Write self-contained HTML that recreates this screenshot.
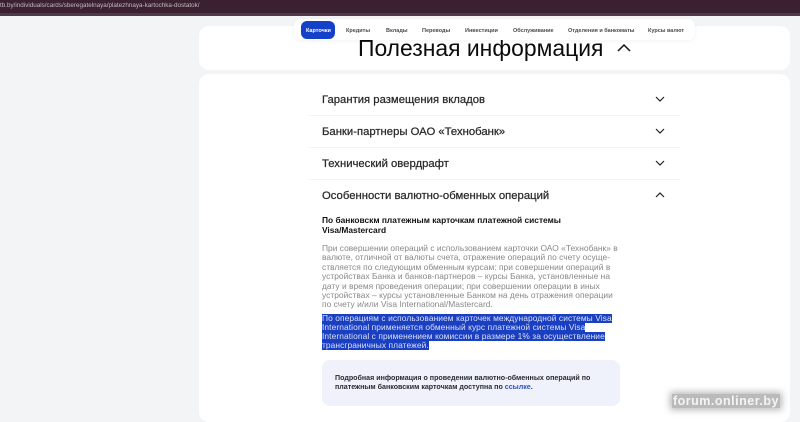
<!DOCTYPE html>
<html lang="ru"><head><meta charset="utf-8"><style>
html,body{margin:0;padding:0;width:800px;height:422px;overflow:hidden;background:#f3f4f6;font-family:"Liberation Sans",sans-serif}
.a{position:absolute;white-space:nowrap}
.bar{left:0;top:0;width:800px;height:13px;background:#3a2030}
.bar2{left:0;top:13px;width:800px;height:3px;background:#4e3a45}
.card{background:#fff;left:199px;width:591px;border-radius:10px}
.nav{left:294px;top:19px;width:401px;height:21px;background:#fff;border-radius:7px;box-shadow:0 1px 4px rgba(0,0,0,.05)}
.btn{left:301px;top:21px;width:34px;height:18px;background:#1441c8;border-radius:6px}
.n{font-size:5.5px;line-height:8px;top:26.6px;color:#222;font-weight:bold;opacity:.82}
.h{font-size:11.3px;line-height:14px;left:322px;color:#2a2a2a;-webkit-text-stroke:.25px #2a2a2a}
.d{left:309px;width:371px;height:1px;background:#f4f4f6}
.b{font-size:8.4px;line-height:11px;left:322px;font-weight:bold;color:#111}
.g{font-size:8.4px;line-height:11px;left:322px;color:#888;letter-spacing:.03px}
.s{font-size:8.4px;line-height:9.2px;height:9.2px;left:322px;color:#d8e0f8;background:#1a3fc0;letter-spacing:.09px}
.i{font-size:7.1px;line-height:10px;left:335px;font-weight:bold;color:#2a2a35}
</style></head><body>
<div class="a bar"></div><div class="a bar2"></div>
<div class="a" style="left:0;top:1.4px;font-size:6.3px;line-height:10px;color:#c4b9bf">tb.by/individuals/cards/sberegatelnaya/platezhnaya-kartochka-dostatok/</div>

<div class="a card" style="top:26px;height:44px"></div>
<div class="a card" style="top:74px;height:348px"></div>

<div class="a" style="left:358px;top:33px;font-size:22.9px;line-height:30px;color:#0b0b0b">Полезная информация</div>
<svg class="a" style="left:616px;top:42px" width="16" height="11" viewBox="0 0 16 11"><path d="M2 9L8 3L14 9" fill="none" stroke="#111" stroke-width="1.5"/></svg>

<div class="a nav"></div><div class="a btn"></div>
<div class="a n" style="left:306px;color:#fff;opacity:1">Карточки</div>
<div class="a n" style="left:346px">Кредиты</div>
<div class="a n" style="left:386px">Вклады</div>
<div class="a n" style="left:422px">Переводы</div>
<div class="a n" style="left:465px">Инвестиции</div>
<div class="a n" style="left:513px">Обслуживание</div>
<div class="a n" style="left:568px">Отделения и банкоматы</div>
<div class="a n" style="left:648px">Курсы валют</div>

<div class="a h" style="top:92.7px">Гарантия размещения вкладов</div>
<div class="a h" style="top:124.7px">Банки-партнеры ОАО «Технобанк»</div>
<div class="a h" style="top:156.7px">Технический овердрафт</div>
<div class="a h" style="top:189.4px">Особенности валютно-обменных операций</div>
<div class="a d" style="top:115px"></div><div class="a d" style="top:147px"></div><div class="a d" style="top:179px"></div>
<svg class="a" style="left:654px;top:93px" width="12" height="12" viewBox="0 0 12 12"><path d="M2 4L6 8L10 4" fill="none" stroke="#222" stroke-width="1.2"/></svg>
<svg class="a" style="left:654px;top:125px" width="12" height="12" viewBox="0 0 12 12"><path d="M2 4L6 8L10 4" fill="none" stroke="#222" stroke-width="1.2"/></svg>
<svg class="a" style="left:654px;top:157px" width="12" height="12" viewBox="0 0 12 12"><path d="M2 4L6 8L10 4" fill="none" stroke="#222" stroke-width="1.2"/></svg>
<svg class="a" style="left:654px;top:189px" width="12" height="12" viewBox="0 0 12 12"><path d="M2 8L6 4L10 8" fill="none" stroke="#222" stroke-width="1.2"/></svg>

<div class="a b" style="top:215px">По банковскм платежным карточкам платежной системы</div>
<div class="a b" style="top:225px">Visa/Mastercard</div>

<div class="a g" style="top:243px">При совершении операций с использованием карточки ОАО «Технобанк» в</div>
<div class="a g" style="top:252px">валюте, отличной от валюты счета, отражение операций по счету осуще-</div>
<div class="a g" style="top:262px">ствляется по следующим обменным курсам: при совершении операций в</div>
<div class="a g" style="top:271px">устройствах Банка и банков-партнеров – курсы Банка, установленные на</div>
<div class="a g" style="top:281px">дату и время проведения операции; при совершении операции в иных</div>
<div class="a g" style="top:290px">устройствах – курсы установленные Банком на день отражения операции</div>
<div class="a g" style="top:299px">по счету и/или Visa International/Mastercard.</div>

<div class="a s" style="top:313.6px">По операциям с использованием карточек международной системы Visa</div>
<div class="a s" style="top:322.8px">International применяется обменный курс платежной системы Visa</div>
<div class="a s" style="top:332px">International с применением комиссии в размере 1% за осуществление</div>
<div class="a s" style="top:341.2px">трансграничных платежей.</div>

<div class="a" style="left:322px;top:360px;width:298px;height:46px;background:#eff1fb;border-radius:8px"></div>
<div class="a i" style="top:373px">Подробная информация о проведении валютно-обменных операций по</div>
<div class="a i" style="top:382px">платежным банковским карточкам доступна по <span style="color:#2f55c8">ссылке</span>.</div>

<div class="a" style="left:672px;top:394px;font-size:12.5px;line-height:14px;font-weight:bold;color:#f4f4f4;letter-spacing:.5px;background:rgba(130,130,130,.55);box-shadow:0 0 7px 2px rgba(130,130,130,.55);padding:0 1px">forum.onliner.by</div>
</body></html>
